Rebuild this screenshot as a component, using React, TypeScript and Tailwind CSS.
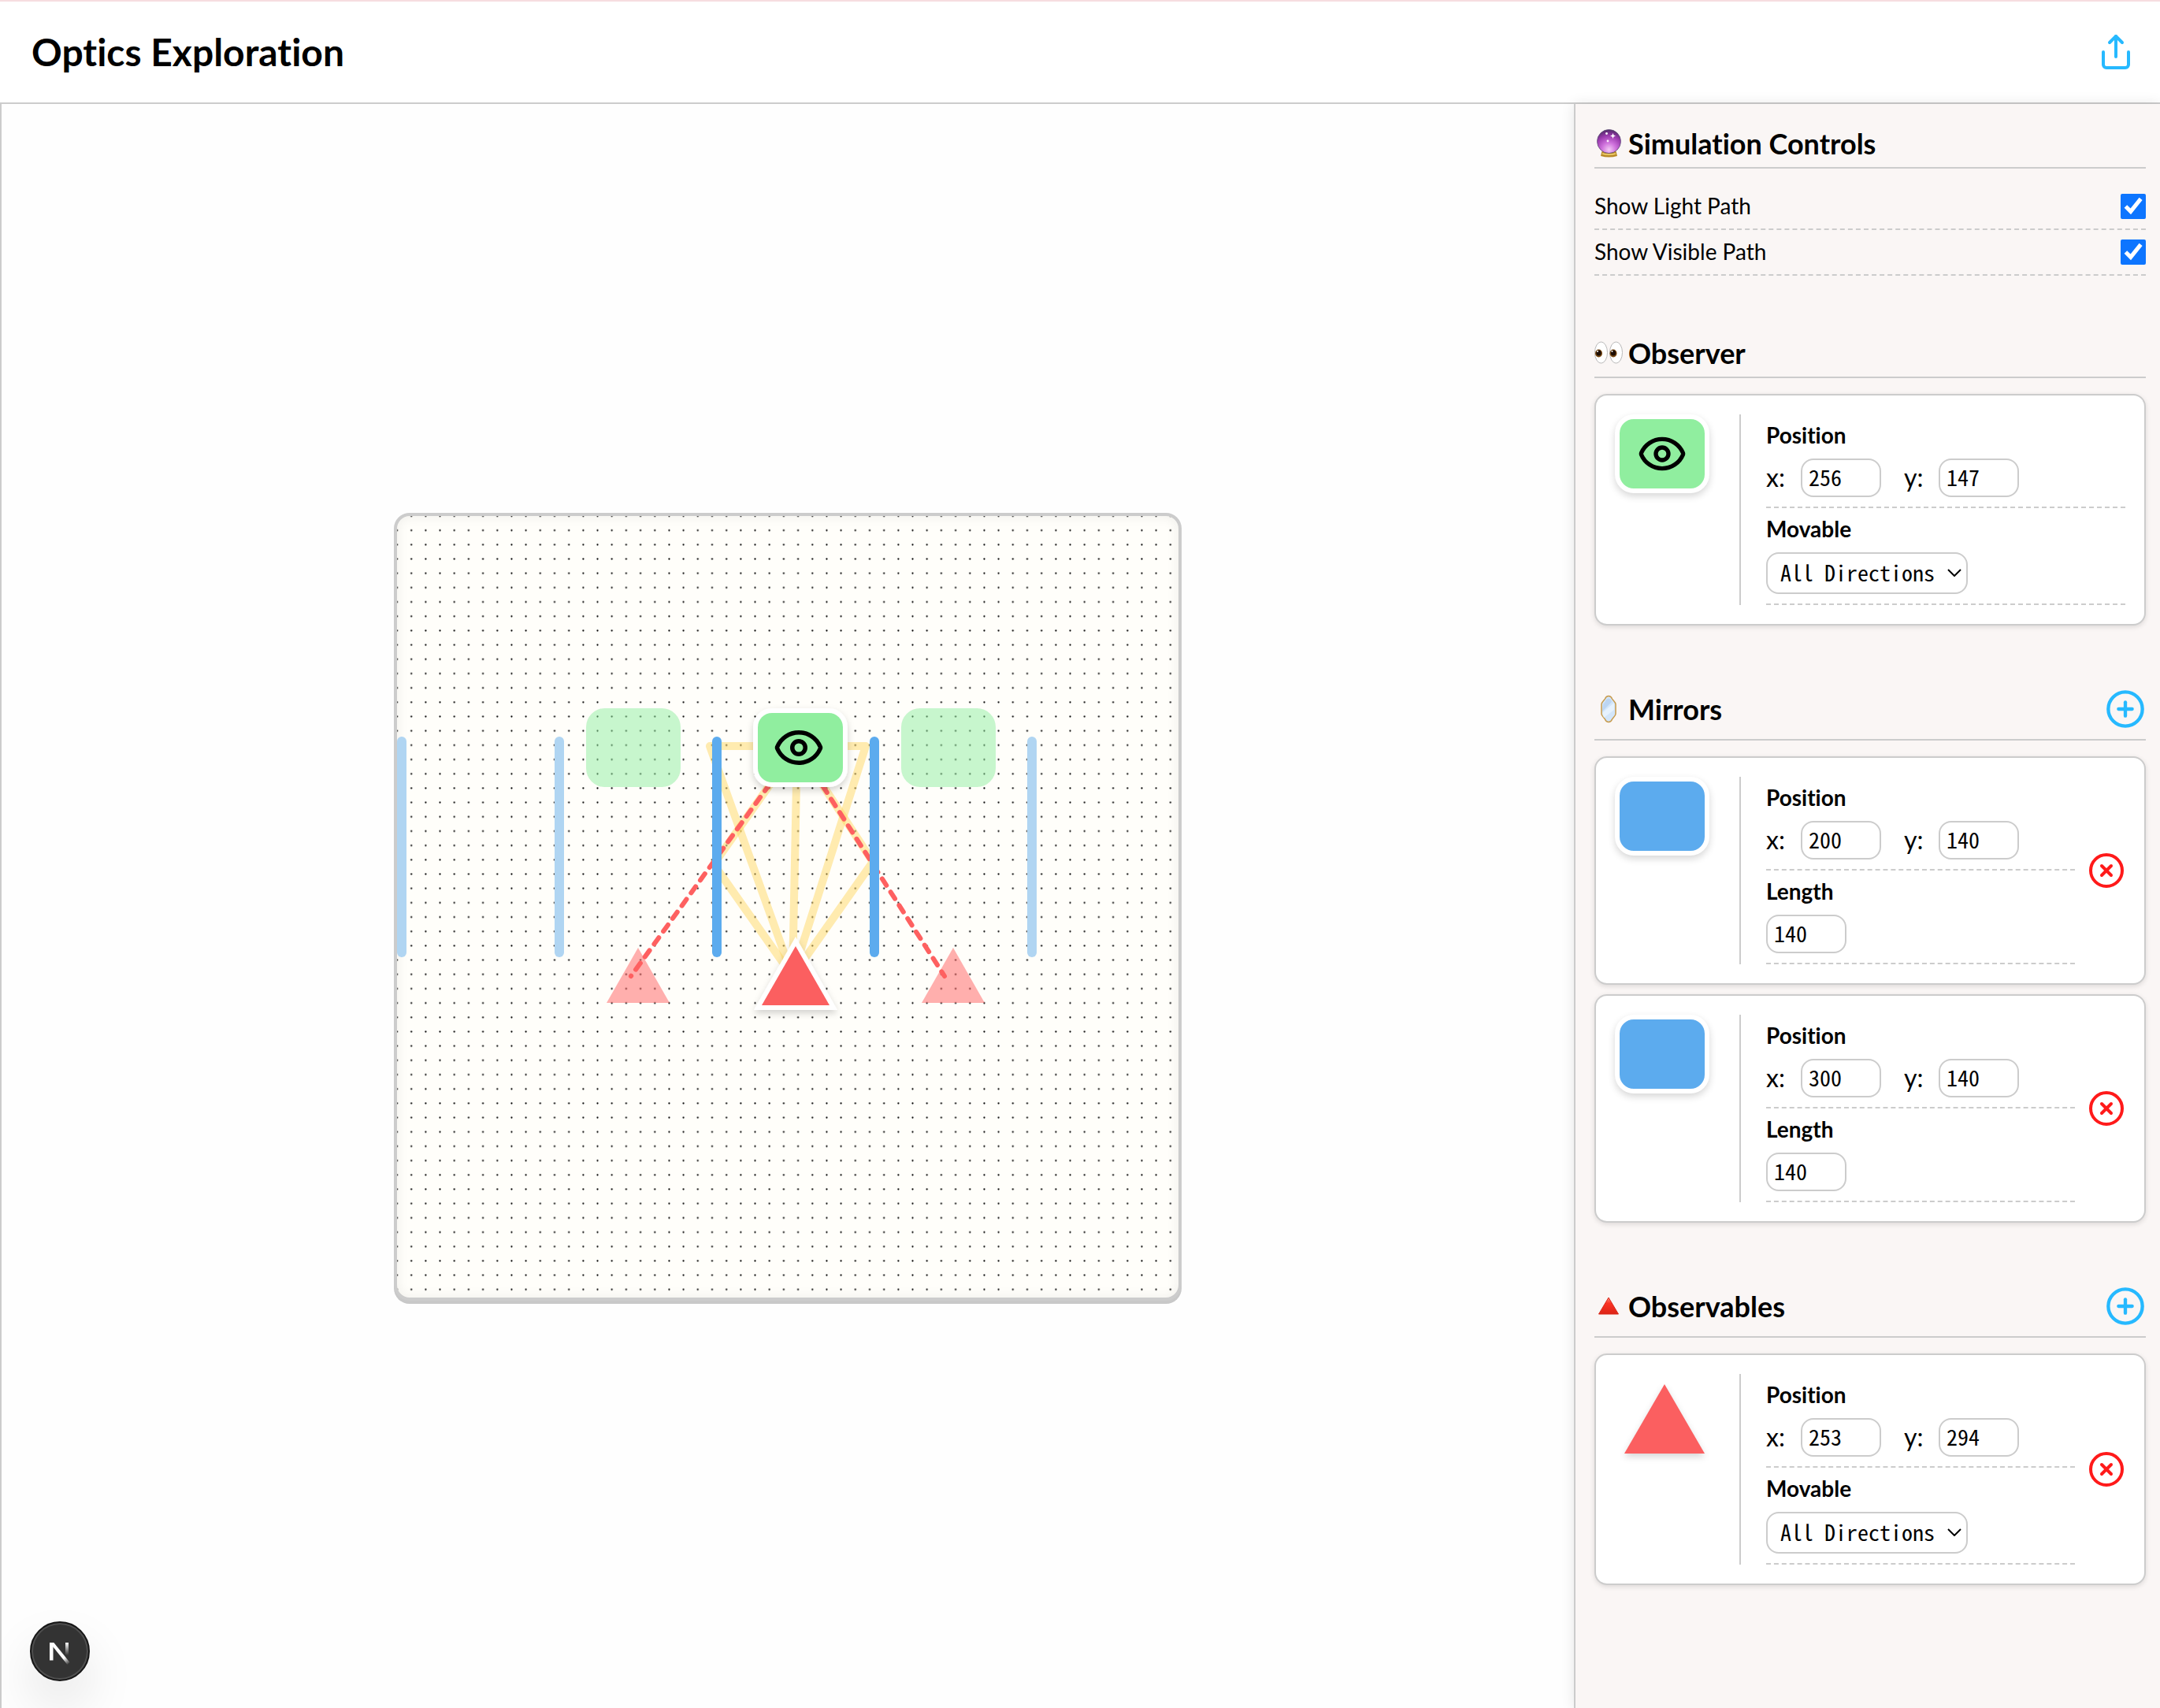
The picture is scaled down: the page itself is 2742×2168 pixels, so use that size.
import { useId, useState } from "react";
import type { ReactNode } from "react";
import { CirclePlus, CircleX, Eye, Share } from "lucide-react";

const MONO = "font-['Noto_Sans_Mono_CJK_SC','Liberation_Mono',monospace]";

function CrystalBallIcon() {
  return (
    <svg viewBox="0 0 36 36" className="size-9" aria-hidden="true">
      <defs>
        <radialGradient id="ball" cx="50%" cy="85%" r="85%">
          <stop offset="0" stopColor="#f3c9f5" />
          <stop offset="0.35" stopColor="#cf72dc" />
          <stop offset="0.7" stopColor="#9a3aae" />
          <stop offset="1" stopColor="#4f2a66" />
        </radialGradient>
      </defs>
      <path d="M9.500 28h18l1.500 6q-10.500 3-21 0z" fill="#b98a28" />
      <path d="M10 31q8.500 2.500 17 0" stroke="#f4d774" strokeWidth="1.500" fill="none" />
      <circle cx="18.500" cy="15.500" r="15" fill="url(#ball)" stroke="#5e4f78" strokeWidth="0.800" />
      <circle cx="15.500" cy="5.500" r="1.400" fill="#fff" />
      <path d="m23.500 5 1 2.500 2.500 1-2.500 1-1 2.500-1-2.500-2.500-1 2.500-1z" fill="#fff" />
      <circle cx="17" cy="15" r="1.400" fill="#fbe9fb" />
    </svg>
  );
}

function EyesIcon() {
  return (
    <svg viewBox="0 0 36 36" className="size-9" aria-hidden="true">
      <ellipse cx="8.500" cy="17.500" rx="8" ry="13.500" fill="#fff" stroke="#b9b9b9" strokeWidth="1" />
      <ellipse cx="27.500" cy="17.500" rx="8" ry="13.500" fill="#fff" stroke="#b9b9b9" strokeWidth="1" />
      <ellipse cx="5.500" cy="18.500" rx="4.500" ry="5" fill="#7a4a14" />
      <ellipse cx="5.500" cy="18" rx="3.200" ry="3.600" fill="#1d0d04" />
      <ellipse cx="24" cy="18.500" rx="4.500" ry="5" fill="#7a4a14" />
      <ellipse cx="24" cy="18" rx="3.200" ry="3.600" fill="#1d0d04" />
      <circle cx="4" cy="16" r="1" fill="#fff" />
      <circle cx="22.500" cy="16" r="1" fill="#fff" />
    </svg>
  );
}

function MirrorIcon() {
  return (
    <svg viewBox="0 0 36 36" className="size-9" aria-hidden="true">
      <path
        d="M18 1.500c2 0 3.500 1 4.500 3.500 1 2 4.500 4 4.500 7v12c0 3-3.500 5-4.500 7-1 2.500-2.500 3.500-4.500 3.500s-3.500-1-4.500-3.500c-1-2-4.500-4-4.500-7V12c0-3 3.500-5 4.500-7 1-2.500 2.500-3.500 4.500-3.500z"
        fill="#d3e6fa"
        stroke="#c79a4b"
        strokeWidth="1.500"
      />
      <path d="M10 23 25 10v9L12 29z" fill="#e6f2fe" />
      <path d="M11 12q3-3 4-6 3-3 6 0l1 3-12 12z" fill="#bcd5f2" />
    </svg>
  );
}

function RedTriangleIcon() {
  return (
    <svg viewBox="0 0 36 36" className="size-9" aria-hidden="true">
      <defs>
        <linearGradient id="redTri" x1="0" y1="0" x2="0" y2="1">
          <stop offset="0" stopColor="#ff8a7a" />
          <stop offset="0.350" stopColor="#fb3324" />
          <stop offset="1" stopColor="#dc2416" />
        </linearGradient>
      </defs>
      <path d="M18 7 30.500 28h-25z" fill="url(#redTri)" stroke="#d8291b" strokeWidth="1" strokeLinejoin="round" />
    </svg>
  );
}

function Section({
  icon,
  title,
  onAdd,
  children,
}: {
  icon: ReactNode;
  title: string;
  onAdd?: boolean;
  children: ReactNode;
}) {
  return (
    <section>
      <div className="mb-5 flex items-center justify-between border-b-2 border-[#cccccc] pb-2">
        <h2 className="flex items-center gap-[7px] text-4xl leading-[44px] font-bold">
          {icon}
          {title}
        </h2>
        {onAdd && (
          <button type="button" aria-label={`Add to ${title}`} className="flex h-[60px] items-center text-[#26b9ff]">
            <CirclePlus size={52} />
          </button>
        )}
      </div>
      {children}
    </section>
  );
}

function ToggleRow({ label }: { label: string }) {
  const [on, setOn] = useState(true);
  return (
    <label className="flex items-start justify-between border-b-2 border-dashed border-[#cccccc] py-3 text-[28px] leading-[30px]">
      {label}
      <input type="checkbox" checked={on} onChange={() => setOn(!on)} className="size-8 accent-[#0d75ff]" />
    </label>
  );
}

function NumberBox({ value, id, label }: { value: number; id?: string; label?: string }) {
  return (
    <input
      id={id}
      aria-label={label}
      defaultValue={value}
      inputMode="numeric"
      className={`h-[49px] w-[102px] rounded-2xl border-2 border-[#cccccc] bg-white px-2 pb-[3px] text-[28px] ${MONO}`}
    />
  );
}

function Property({ title, children }: { title: string; children: ReactNode }) {
  return (
    <div className="flex flex-col gap-3 border-b-2 border-dashed border-[#cccccc] pt-2 pb-3">
      <h3 className="text-[28px] leading-9 font-bold">{title}</h3>
      {children}
    </div>
  );
}

function PositionProperty({ x, y }: { x: number; y: number }) {
  const id = useId();
  return (
    <Property title="Position">
      <div className="flex items-center gap-[29px] text-[32px] leading-10">
        <div className="flex items-center">
          <label htmlFor={`${id}x`} className="w-11 pb-0.5">
            x:
          </label>
          <NumberBox id={`${id}x`} value={x} />
        </div>
        <div className="flex items-center">
          <label htmlFor={`${id}y`} className="w-11 pb-0.5">
            y:
          </label>
          <NumberBox id={`${id}y`} value={y} />
        </div>
      </div>
    </Property>
  );
}

function LengthProperty({ value }: { value: number }) {
  return (
    <Property title="Length">
      <div className="flex">
        <NumberBox value={value} label="Length" />
      </div>
    </Property>
  );
}

function MovableProperty() {
  return (
    <Property title="Movable">
      <div className="relative w-64">
        <select
          aria-label="Movable"
          className={`block h-[53px] w-full appearance-none rounded-2xl border-2 border-[#cccccc] bg-white pb-[3px] pl-4 text-[28px] ${MONO}`}
        >
          <option>All Directions</option>
          <option>Horizontal</option>
          <option>Vertical</option>
          <option>None</option>
        </select>
        <svg viewBox="0 0 18 10" className="pointer-events-none absolute top-[21px] right-2 h-[10px] w-[18px]" aria-hidden="true">
          <path d="m1 1 8 8 8-8" fill="none" stroke="#000" strokeWidth="2" />
        </svg>
      </div>
    </Property>
  );
}

function Card({ preview, removable, children }: { preview: ReactNode; removable?: boolean; children: ReactNode }) {
  return (
    <article className="flex items-center gap-4 rounded-2xl border-2 border-[#cccccc] bg-white p-6 shadow-[0_2px_6px_rgba(0,0,0,0.12)]">
      <div className="flex min-w-0 flex-1">
        <div className="w-[158px] shrink-0">{preview}</div>
        <div className="min-w-0 flex-1 border-l-2 border-[#cccccc] pl-8">{children}</div>
      </div>
      {removable && (
        <button type="button" aria-label="Remove" className="text-[#ff1a1a]">
          <CircleX size={48} />
        </button>
      )}
    </article>
  );
}

const TILE =
  "flex h-[100px] w-[120px] items-center justify-center rounded-3xl border-[6px] border-white shadow-[0_4px_10px_rgba(0,0,0,0.16)]";

function TrianglePreview() {
  return (
    <svg viewBox="0 0 126 108" className="h-[108px] w-[126px] overflow-visible drop-shadow-[0_4px_4px_rgba(0,0,0,0.16)]" aria-hidden="true">
      <path d="M63 13 114 101H12z" fill="#fb5f60" />
    </svg>
  );
}

const GRID = 1000 / 55;
const RAYS = [
  "M1012 947 1006 1239",
  "M1012 947H901L1006 1239",
  "M1012 947H1099L1006 1239",
  "M1012 947 906 1097 1006 1239",
  "M1012 947 1108 1094 1006 1239",
];
const SIGHT_LINES = ["M1012 947 801 1239", "M1012 947 1199 1239"];
const REAL_MIRRORS = [904, 1104];
const VIRTUAL_MIRRORS = [504, 704, 1304];

function Board() {
  return (
    <div className="overflow-hidden rounded-[20px] border-4 border-[#cccccc] bg-[#fffefa] shadow-[0_4px_0_#c8c8c8]">
      <svg viewBox="504 655 992 992" className="block size-[992px]" role="img" aria-label="Optics board">
        <defs>
          <pattern id="dots" x={504 - GRID / 2} y={655 - GRID / 2} width={GRID} height={GRID} patternUnits="userSpaceOnUse">
            <circle cx={GRID / 2} cy={GRID / 2} r="1.100" fill="#000" />
          </pattern>
          <filter id="lift" x="-20%" y="-20%" width="140%" height="150%">
            <feDropShadow dx="0" dy="4" stdDeviation="4" floodColor="#000" floodOpacity="0.180" />
          </filter>
          <filter id="rim" x="-5%" y="-5%" width="110%" height="110%">
            <feGaussianBlur stdDeviation="7" />
          </filter>
        </defs>
        <rect x="504" y="655" width="992" height="992" fill="url(#dots)" />
        <rect x="500" y="651" width="1000" height="1000" rx="20" fill="none" stroke="#000" strokeOpacity="0.080" strokeWidth="8" filter="url(#rim)" />

        {VIRTUAL_MIRRORS.map((x) => (
          <rect key={x} x={x} y="935" width="12" height="280" rx="6" fill="#b0d5f2" />
        ))}
        <g fill="#90ee9f" fillOpacity="0.500">
          <rect x="744" y="899" width="120" height="100" rx="24" />
          <rect x="1144" y="899" width="120" height="100" rx="24" />
        </g>
        <g fill="#ff6060" fillOpacity="0.500">
          <path d="M810 1203 850 1273H770z" />
          <path d="M1210 1203 1250 1273H1170z" />
        </g>

        <g fill="none" stroke="#ffd863" strokeOpacity="0.500" strokeWidth="10" strokeLinecap="round" strokeLinejoin="round">
          {RAYS.map((d) => (
            <path key={d} d={d} />
          ))}
        </g>
        <g fill="none" stroke="#fe6060" strokeWidth="6" strokeLinecap="round" strokeDasharray="10 10">
          {SIGHT_LINES.map((d) => (
            <path key={d} d={d} />
          ))}
        </g>

        {REAL_MIRRORS.map((x) => (
          <rect key={x} x={x} y="935" width="12" height="280" rx="6" fill="#5cabee" />
        ))}
        <g filter="url(#lift)">
          <path d="M1010 1189 1063 1282H957z" fill="#fff" />
          <path d="M1010 1201 1053 1276H967z" fill="#fb5f60" />
        </g>
        <g filter="url(#lift)">
          <rect x="956" y="899" width="120" height="100" rx="24" fill="#fff" />
          <rect x="962" y="905" width="108" height="88" rx="18" fill="#90ee9f" />
        </g>
        <Eye x={981} y={916} width={66} height={66} color="#000" />
      </svg>
    </div>
  );
}

function DevBadge() {
  return (
    <button
      type="button"
      aria-label="Open developer tools"
      className="fixed bottom-[34px] left-[38px] flex size-[76px] items-center justify-center rounded-full border-2 border-[#171717] bg-[#333333] shadow-[inset_0_0_0_2px_#4f4f4f,0_32px_64px_rgba(0,0,0,0.1)]"
    >
      <svg viewBox="0 0 76 76" className="size-[76px] shrink-0" fill="none" aria-hidden="true">
        <defs>
          <linearGradient id="diag" x1="44" y1="46" x2="50" y2="54" gradientUnits="userSpaceOnUse">
            <stop stopColor="#fff" />
            <stop offset="1" stopColor="#fff" stopOpacity="0" />
          </linearGradient>
          <linearGradient id="bar" x1="47" y1="27" x2="47" y2="43" gradientUnits="userSpaceOnUse">
            <stop stopColor="#fff" />
            <stop offset="1" stopColor="#fff" stopOpacity="0" />
          </linearGradient>
        </defs>
        <rect x="25" y="27" width="4.500" height="22.500" fill="#fff" />
        <path d="M25 27h5.300L50.500 52l-3 3z" fill="url(#diag)" />
        <rect x="45" y="27" width="4" height="16.500" fill="url(#bar)" />
      </svg>
    </button>
  );
}

export default function App() {
  return (
    <div className="flex min-h-screen flex-col border-t-2 border-[#f6dde0] bg-white font-['Lato',sans-serif] text-black [font-variant-ligatures:none]">
      <header className="flex h-[130px] items-center justify-between border-b-2 border-[#cccccc] bg-white pr-8 pl-10">
        <h1 className="text-5xl leading-[58px] font-bold">Optics Exploration</h1>
        <button type="button" aria-label="Share" className="text-[#26b9ff]">
          <Share size={48} />
        </button>
      </header>
      <div className="flex flex-1">
        <main className="flex flex-1 items-center justify-center border-l-2 border-[#cccccc] bg-[#fefefe] pt-0.5">
          <Board />
        </main>
        <aside className="flex w-[744px] shrink-0 flex-col gap-[76px] border-l-2 border-[#cccccc] bg-[#faf6f5] pt-7 pr-[18px] pb-7 pl-6 shadow-[0_0_16px_rgba(0,0,0,0.1)]">
          <Section icon={<CrystalBallIcon />} title="Simulation Controls">
            <ToggleRow label="Show Light Path" />
            <ToggleRow label="Show Visible Path" />
          </Section>
          <Section icon={<EyesIcon />} title="Observer">
            <Card
              preview={
                <div className={`${TILE} bg-[#90ee9f]`}>
                  <Eye size={64} />
                </div>
              }
            >
              <PositionProperty x={256} y={147} />
              <MovableProperty />
            </Card>
          </Section>
          <Section icon={<MirrorIcon />} title="Mirrors" onAdd>
            <div className="flex flex-col gap-3">
              <Card removable preview={<div className={`${TILE} bg-[#5cabee]`} />}>
                <PositionProperty x={200} y={140} />
                <LengthProperty value={140} />
              </Card>
              <Card removable preview={<div className={`${TILE} bg-[#5cabee]`} />}>
                <PositionProperty x={300} y={140} />
                <LengthProperty value={140} />
              </Card>
            </div>
          </Section>
          <Section icon={<RedTriangleIcon />} title="Observables" onAdd>
            <Card removable preview={<TrianglePreview />}>
              <PositionProperty x={253} y={294} />
              <MovableProperty />
            </Card>
          </Section>
        </aside>
      </div>
      <DevBadge />
    </div>
  );
}
